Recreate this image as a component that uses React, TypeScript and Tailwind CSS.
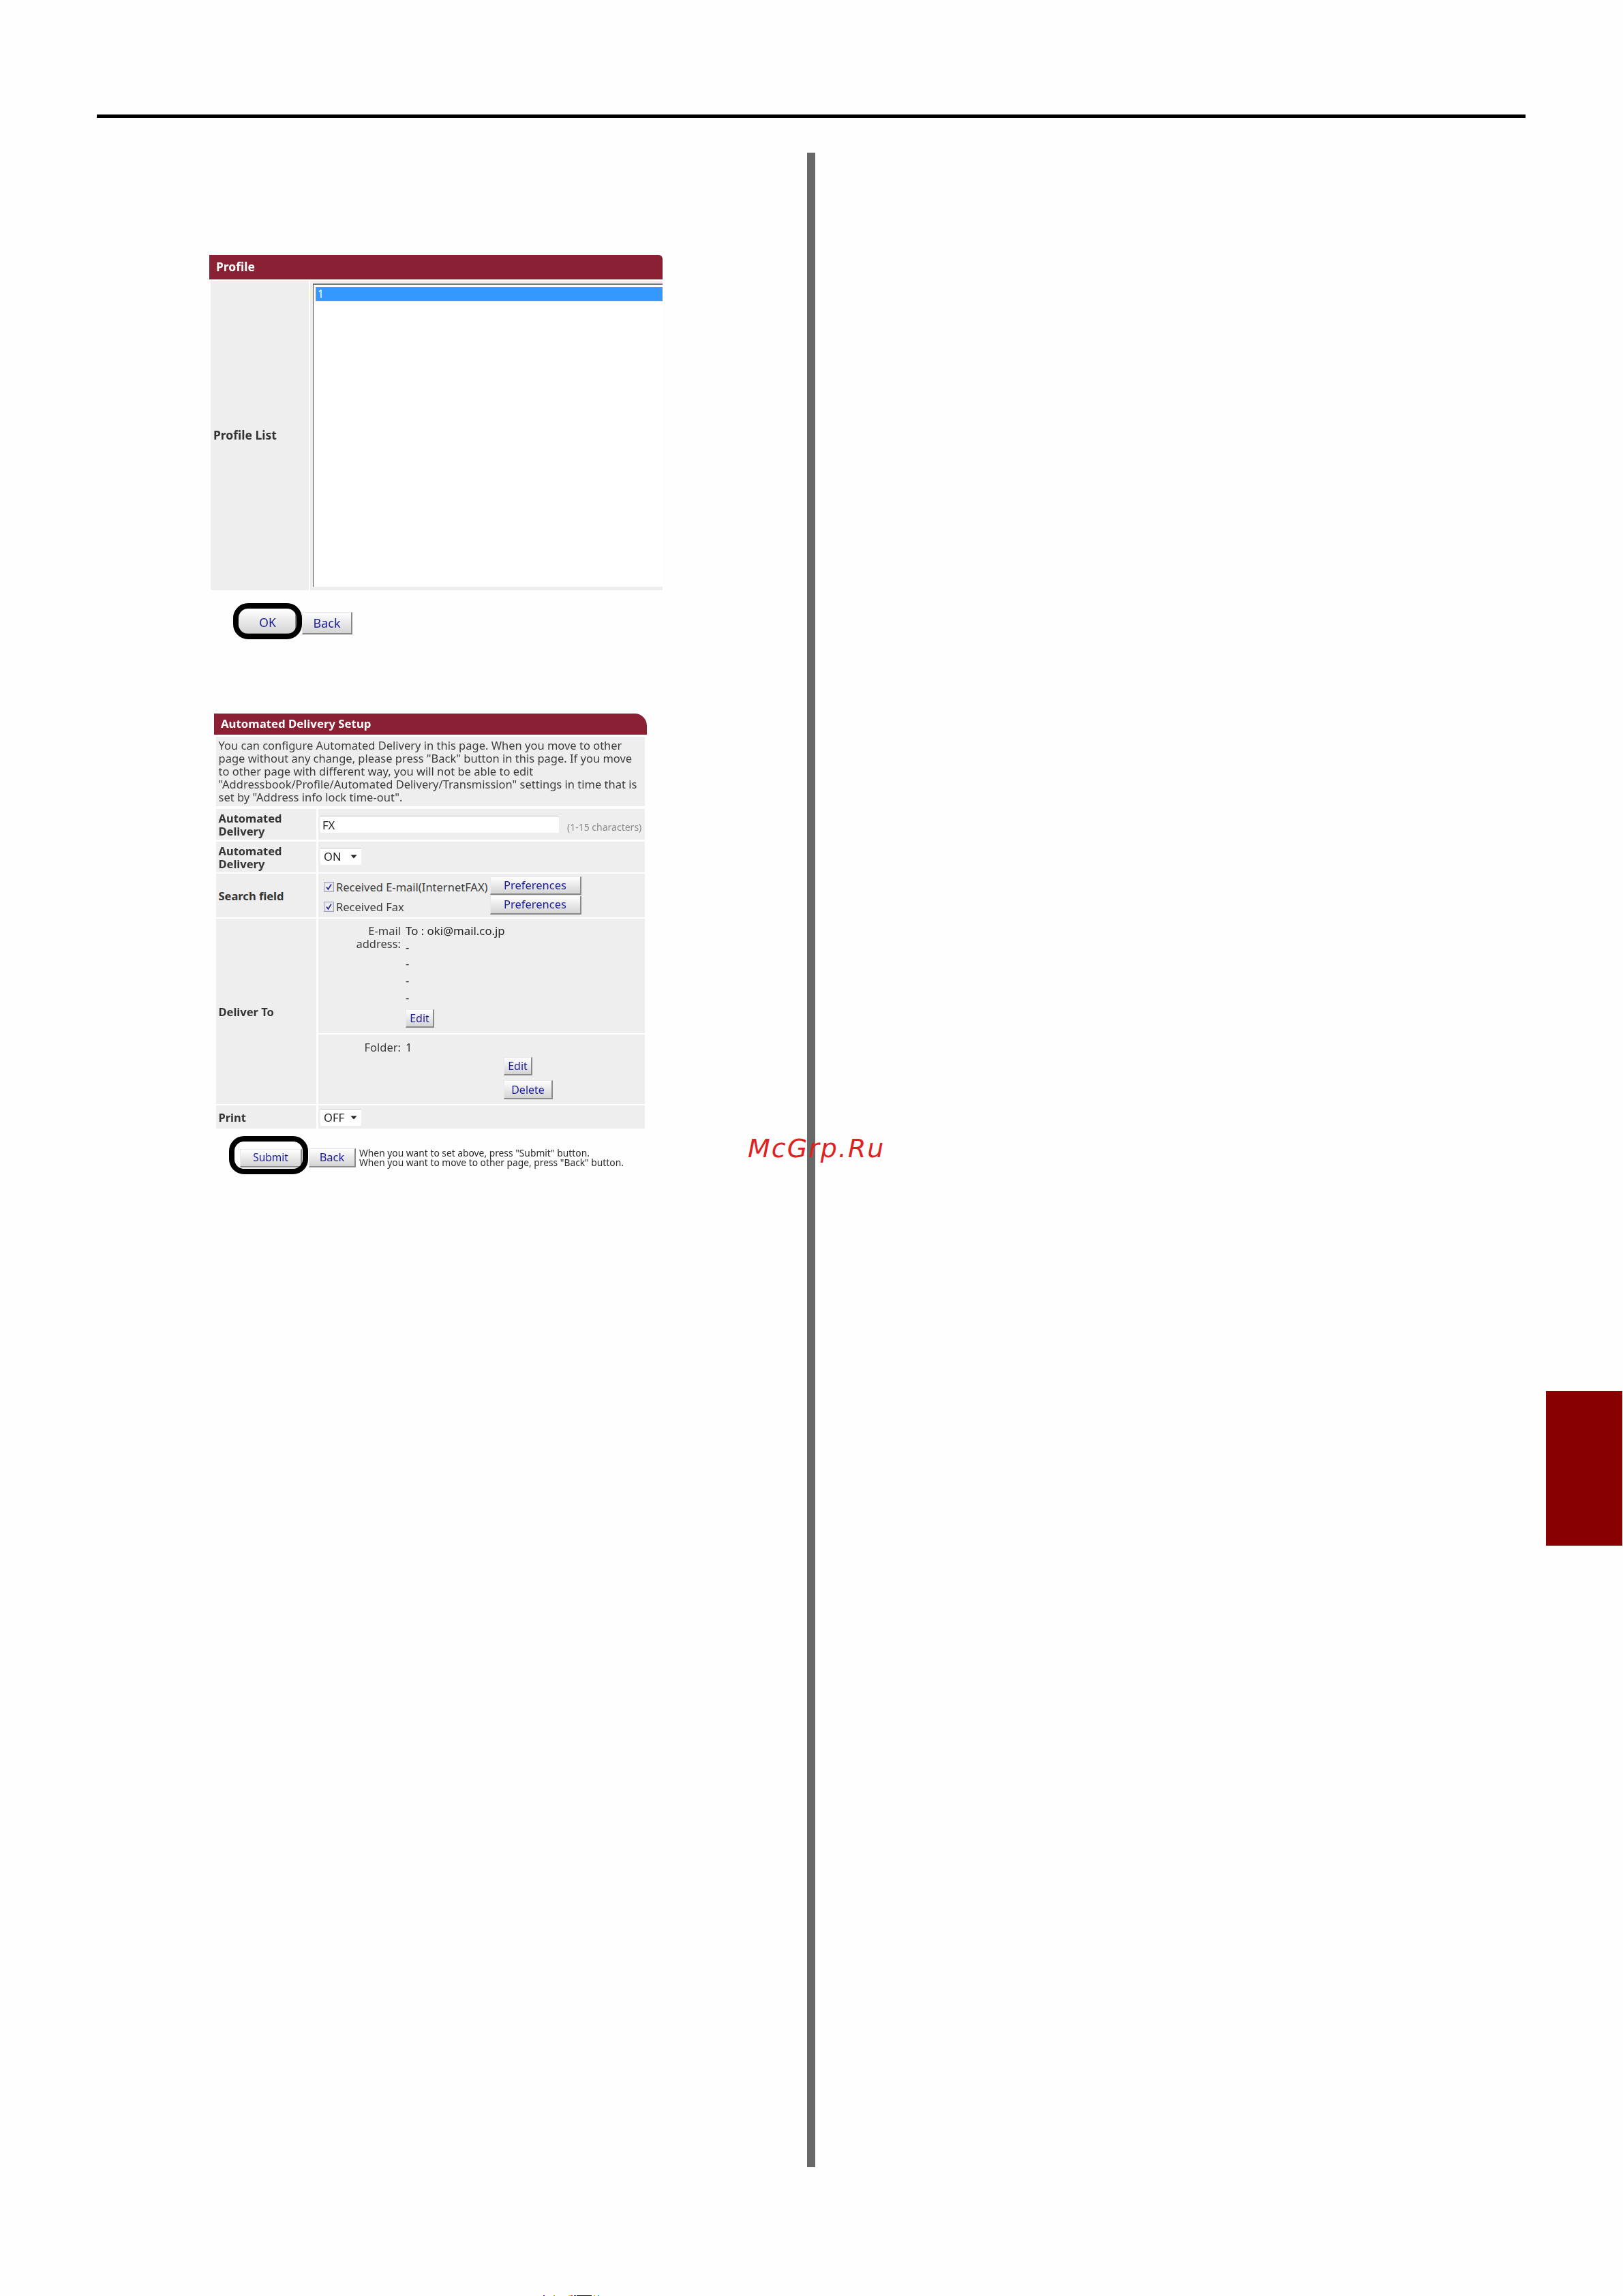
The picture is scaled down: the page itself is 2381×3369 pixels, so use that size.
const font = "font-['Noto_Sans',sans-serif]";

function Btn({ label, className }: { label: string; className: string }) {
  return (
    <div
      className={`flex items-center justify-center bg-gradient-to-b from-white to-[#d4d4d4] border-t border-l border-t-[#e8e8e8] border-l-[#e8e8e8] border-r-2 border-b-2 border-r-[#8a8a8a] border-b-[#8a8a8a] text-[#1c1c96] leading-none ${className}`}
    >
      {label}
    </div>
  );
}

function Sel({ label }: { label: string }) {
  return (
    <div className="w-[60px] h-[25px] bg-white rounded-[2px] border-t border-[#c4c4c4] flex items-center justify-between pl-[5px] pr-[5px] text-[16.5px] text-[#222] leading-none">
      <span>{label}</span>
      <svg width="10" height="6" viewBox="0 0 10 6" className="mr-[1px]">
        <path d="M0.5 0.5H9.5L5 5.5Z" fill="#222" />
      </svg>
    </div>
  );
}

function Check() {
  return (
    <svg width="15" height="15" viewBox="0 0 15 15" className="shrink-0">
      <rect x="0.5" y="0.5" width="14" height="14" fill="#dfe0ea" stroke="#a4a6b4" />
      <rect x="2.5" y="2.5" width="10" height="10" fill="#f2f2f6" />
      <path d="M4 7.5L6.4 11L11 3.5" fill="none" stroke="#23268c" strokeWidth="1.7" />
    </svg>
  );
}

function Label({ children }: { children: React.ReactNode }) {
  return (
    <div className="w-[147.5px] shrink-0 bg-[#eeeeee] flex items-center pl-[4px] font-bold text-[#333] text-[16.5px] leading-[19px]">
      {children}
    </div>
  );
}

export default function App() {
  return (
    <div className={`relative w-[2381px] h-[3369px] overflow-hidden bg-[#fefefe] flex flex-col ${font}`}>
      <div className="ml-[142px] mt-[168px] w-[2096px] h-[5px] bg-black shrink-0" />

      <div className="flex mt-[51px]">
        <div className="w-[1184px] shrink-0 flex flex-col">
          {/* Profile panel */}
          <div className="ml-[307px] mt-[150px] w-[665px] blur-[0.4px]">
            <div className="h-[36px] bg-[#8a2033] rounded-tr-[6px] flex items-center pl-[10px] text-white font-bold text-[17.5px] leading-none">
              Profile
            </div>
            <div className="flex gap-[2px] mt-[2px] h-[454px] ml-[2px]">
              <div className="w-[144px] bg-[#eeeeee] flex items-center pl-[4px] font-bold text-[#333] text-[17.5px] leading-none">
                Profile List
              </div>
              <div className="flex-1 bg-[#eeeeee] pl-[4px] pt-[4px] pb-[5px]">
                <div className="h-full bg-white border-t-2 border-l border-t-[#777] border-l-[#555] pl-[3px] pt-[3px]">
                  <div className="h-[21px] bg-[#3399ff] border border-dotted border-[#c08a50] text-white text-[16px] leading-[19px] pl-[2px]">
                    1
                  </div>
                </div>
              </div>
            </div>
            <div className="relative flex ml-[44px] mt-[27px]">
              <Btn label="OK" className="w-[84px] h-[38px] pt-[5px] text-[17.5px]" />
              <Btn label="Back" className="ml-[8px] w-[74px] h-[33px] mt-[5px] text-[18px]" />
              <div className="absolute left-[-9px] top-[-8px] w-[101px] h-[53px] border-[8px] border-black rounded-[22px]" />
            </div>
          </div>

          {/* Automated Delivery panel */}
          <div className="ml-[314px] mt-[116px] w-[635px] text-[#3c3c3c] text-[16.5px] leading-[19px] blur-[0.4px]">
            <div className="h-[31px] bg-[#8a2033] rounded-tr-[18px] flex items-center pl-[10px] text-white font-bold text-[16.8px] leading-none">
              Automated Delivery Setup
            </div>
            <div className="ml-[2.5px] w-[629.5px] flex flex-col">
              <div className="mt-[3px] h-[102px] bg-[#eeeeee] pl-[4px] pt-[3px]">
                You can configure Automated Delivery in this page. When you move to other<br />
                page without any change, please press "Back" button in this page. If you move<br />
                to other page with different way, you will not be able to edit<br />
                "Addressbook/Profile/Automated Delivery/Transmission" settings in time that is<br />
                set by "Address info lock time-out".
              </div>

              <div className="flex gap-[2.5px] mt-[4px] h-[45px]">
                <Label>Automated<br />Delivery</Label>
                <div className="flex-1 bg-[#eeeeee] flex items-start pl-[3.5px] pt-[10px]">
                  <div className="w-[350px] h-[25px] bg-white rounded-[2px] border-t border-[#c4c4c4] pl-[3px] flex items-center text-[16.5px] text-[#222]">FX</div>
                  <span className="ml-[12px] mt-[9px] text-[14px] leading-[16px] text-[#8a8a8a] whitespace-nowrap">(1-15 characters)</span>
                </div>
              </div>

              <div className="flex gap-[2.5px] mt-[3px] h-[45px]">
                <Label>Automated<br />Delivery</Label>
                <div className="flex-1 bg-[#eeeeee] pl-[3.5px] pt-[9px]">
                  <Sel label="ON" />
                </div>
              </div>

              <div className="flex gap-[2.5px] mt-[2px] h-[64px]">
                <Label>Search field</Label>
                <div className="flex-1 bg-[#eeeeee] pl-[8px] pt-[4px] flex">
                  <div className="w-[244px] shrink-0 flex flex-col">
                    <div className="flex items-center gap-[3.5px] mt-[6px] h-[19px]"><Check /><span>Received E-mail(InternetFAX)</span></div>
                    <div className="flex items-center gap-[3.5px] mt-[10px] h-[19px]"><Check /><span>Received Fax</span></div>
                  </div>
                  <div className="flex flex-col gap-[1px]">
                    <Btn label="Preferences" className="w-[134px] h-[27px] text-[16.5px]" />
                    <Btn label="Preferences" className="w-[134px] h-[28px] text-[16.5px]" />
                  </div>
                </div>
              </div>

              <div className="flex gap-[2.5px] mt-[2px] h-[272px]">
                <Label>Deliver To</Label>
                <div className="flex-1 flex flex-col gap-[2px]">
                  <div className="h-[168px] bg-[#eeeeee] flex pt-[8px]">
                    <div className="w-[121.5px] shrink-0 text-right">E-mail<br />address:</div>
                    <div className="ml-[7px] text-[#222] flex flex-col items-start">
                      <div className="text-[16.8px]">To : oki@mail.co.jp</div>
                      <div className="mt-[4.5px] h-[24px]">-</div>
                      <div className="h-[25px]">-</div>
                      <div className="h-[25px]">-</div>
                      <div className="h-[27.5px]">-</div>
                      <Btn label="Edit" className="w-[42px] h-[27px] text-[16px]" />
                    </div>
                  </div>
                  <div className="h-[102px] bg-[#eeeeee] flex pt-[9px]">
                    <div className="w-[121.5px] shrink-0 text-right">Folder:</div>
                    <div className="ml-[7px] w-[144px] shrink-0 text-[#333]">1</div>
                    <div className="flex flex-col items-start gap-[7px] pt-[24px]">
                      <Btn label="Edit" className="w-[42px] h-[27px] text-[16px]" />
                      <Btn label="Delete" className="w-[72px] h-[28px] text-[16px]" />
                    </div>
                  </div>
                </div>
              </div>

              <div className="flex gap-[2.5px] mt-[2px] h-[34px]">
                <Label>Print</Label>
                <div className="flex-1 bg-[#eeeeee] pl-[3.5px] pt-[5px]">
                  <Sel label="OFF" />
                </div>
              </div>
            </div>

            <div className="relative flex ml-[38px] mt-[29px]">
              <Btn label="Submit" className="w-[91px] h-[27px] mt-[1px] text-[15.5px]" />
              <Btn label="Back" className="ml-[10px] w-[69px] h-[28px] text-[16.5px]" />
              <div className="ml-[5px] text-[13.8px] leading-[14px] text-[#2a2a2a] whitespace-nowrap">
                When you want to set above, press "Submit" button.<br />
                When you want to move to other page, press "Back" button.
              </div>
              <div className="absolute left-[-16px] top-[-18px] w-[116px] h-[56px] border-[8px] border-black rounded-[22px]" />
            </div>
          </div>
        </div>

        <div className="w-[12px] h-[2956px] bg-[#686868] shrink-0" />

        <div className="ml-[1072px] mt-[1817px] w-[112px] h-[227px] bg-[#880000] shrink-0" />
      </div>

      <div className="absolute left-[1097px] top-[1658px] italic font-['DejaVu_Sans',sans-serif] text-[#dd2222] text-[38px] leading-[54px] tracking-[2px] whitespace-nowrap">
        McGrp.Ru
      </div>

      <svg width="82" height="1" viewBox="0 0 82 1" className="absolute left-[797px] bottom-0">
        <rect x="0" width="2" height="1" fill="#4400cc" />
        <rect x="15" width="2" height="1" fill="#88aa00" />
        <rect x="37" width="2" height="1" fill="#eecc00" />
        <rect x="40" width="3" height="1" fill="#cc2222" />
        <rect x="45" width="3" height="1" fill="#223366" />
        <rect x="49" width="22" height="1" fill="#111111" />
        <rect x="74" width="2" height="1" fill="#ccaa00" />
        <rect x="80" width="2" height="1" fill="#22aacc" />
      </svg>
    </div>
  );
}
